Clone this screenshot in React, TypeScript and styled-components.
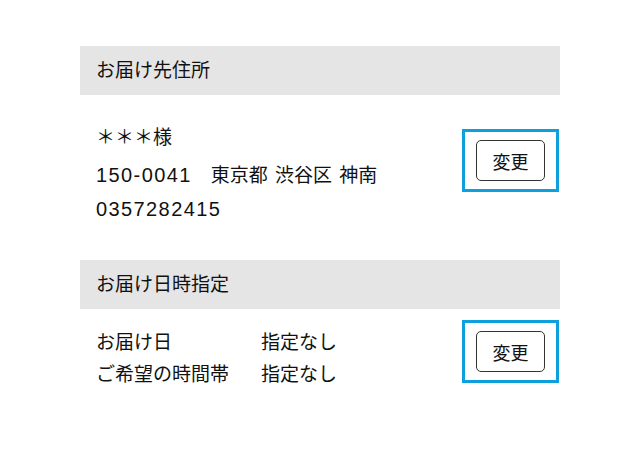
import styled, { createGlobalStyle } from "styled-components";

const GlobalStyle = createGlobalStyle`
  body {
    margin: 0;
    background: #ffffff;
    color: #111111;
    font-family: "Liberation Sans", "Noto Sans CJK JP", sans-serif;
  }
`;

const Page = styled.div`
  width: 480px;
  margin: 46px auto 0;
`;

const SectionHeader = styled.h2`
  margin: 0;
  height: 49px;
  padding: 0 16px 4px;
  box-sizing: border-box;
  display: flex;
  align-items: center;
  background: #e5e5e5;
  font-size: 19px;
  font-weight: 400;
`;

const SectionBody = styled.div<{ $top: number; $bottom: number }>`
  display: flex;
  justify-content: space-between;
  align-items: flex-start;
  padding: ${(p) => p.$top}px 1px ${(p) => p.$bottom}px 16px;
`;

const Lines = styled.div<{ $offset?: number }>`
  padding-top: ${(p) => p.$offset ?? 0}px;
  font-size: 19px;
  word-spacing: 2px;
`;

const Line = styled.p<{ $gap?: number }>`
  margin: 0 0 ${(p) => p.$gap ?? 0}px;
  line-height: 34px;
  white-space: pre;
`;

// 数字は少し大きく、字間も広げる
const Num = styled.span`
  font-size: 20px;
  line-height: 1;
  letter-spacing: 1.4px;
`;

const Grid = styled.dl`
  margin: 0;
  display: grid;
  grid-template-columns: 165px auto;
  line-height: 32px;
`;

const Term = styled.dt`
  margin: 0;
`;

const Desc = styled.dd`
  margin: 0;
`;

const FocusFrame = styled.div<{ $offset: number }>`
  margin-top: ${(p) => p.$offset}px;
  border: 3px solid #0ea0dc;
  padding: 8px 11px;
`;

const ChangeButton = styled.button`
  display: block;
  width: 69px;
  height: 41px;
  border: 1px solid #333333;
  border-radius: 5px;
  background: #ffffff;
  color: #111111;
  font-family: "Noto Sans CJK JP", sans-serif;
  font-size: 18px;
  padding: 0;
  cursor: pointer;
`;

export default function App() {
  return (
    <Page>
      <GlobalStyle />
      <section>
        <SectionHeader>お届け先住所</SectionHeader>
        <SectionBody $top={26} $bottom={33}>
          <Lines>
            <Line $gap={4}>＊＊＊様</Line>
            <Line>
              <Num>150-0041</Num>　東京都 渋谷区 神南
            </Line>
            <Line>
              <Num>0357282415</Num>
            </Line>
          </Lines>
          <FocusFrame $offset={8}>
            <ChangeButton>変更</ChangeButton>
          </FocusFrame>
        </SectionBody>
      </section>
      <section>
        <SectionHeader>お届け日時指定</SectionHeader>
        <SectionBody $top={11} $bottom={20}>
          <Lines $offset={7}>
            <Grid>
              <Term>お届け日</Term>
              <Desc>指定なし</Desc>
              <Term>ご希望の時間帯</Term>
              <Desc>指定なし</Desc>
            </Grid>
          </Lines>
          <FocusFrame $offset={0}>
            <ChangeButton>変更</ChangeButton>
          </FocusFrame>
        </SectionBody>
      </section>
    </Page>
  );
}
